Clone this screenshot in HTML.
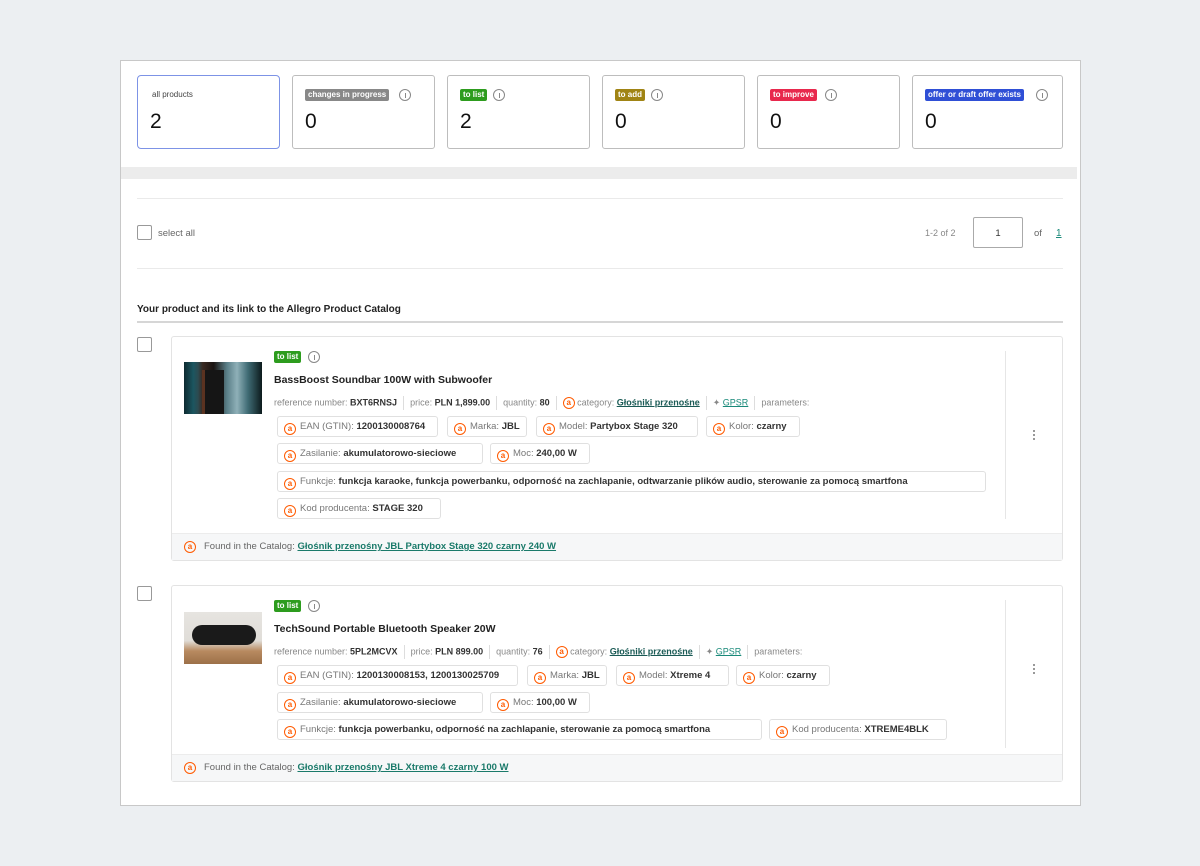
<!DOCTYPE html><html><head><meta charset="utf-8"><style>
*{box-sizing:border-box;margin:0;padding:0}
body{width:1200px;height:866px;background:#eceff2;font-family:"Liberation Sans",sans-serif;position:relative;overflow:hidden;color:#222}
.panel{position:absolute;left:120px;top:60px;width:961px;height:746px;background:#fff;border:1px solid #c8c8c8}
.a{position:absolute}
.stat{position:absolute;top:75px;width:143px;height:74px;border:1px solid #bdbdbd;border-radius:3px;background:#fff}
.stat .n{position:absolute;left:12px;top:34px;font-size:21px;color:#111}
.tag{position:absolute;left:12px;top:13px;font-size:8px;color:#fff;font-weight:bold;padding:1px 3px;border-radius:2px;line-height:10px}
.info{display:inline-block;width:12px;height:12px;border:1px solid #888;border-radius:50%;position:absolute;top:13px}
.info:after{content:"";position:absolute;left:4.5px;top:3px;width:1px;height:5px;background:#888}
.cb{position:absolute;width:15px;height:15px;border:1px solid #999;border-radius:2px;background:#fff}
.card{position:absolute;left:171px;width:892px;border:1px solid #e3e3e3;border-radius:3px;background:#fff}
.foot{position:absolute;left:0;right:0;bottom:0;height:27px;background:#f6f7f8;border-top:1px solid #ececec;font-size:9.5px;color:#666;padding:7px 0 0 32px}
.foot b{color:#1a7a6a;text-decoration:underline}
.al{display:inline-block;width:12px;height:12px;border:1.3px solid #ff5a00;border-radius:50%;color:#ff5a00;font-size:8px;line-height:9px;text-align:center;vertical-align:middle;font-weight:bold}
.chip{position:absolute;height:21px;border:1px solid #e0e0e0;border-radius:3px;font-size:9.5px;color:#777;padding:4px 0 0 6px;white-space:nowrap;overflow:hidden}
.chip b{color:#333}
.chip .al{margin-right:4px;vertical-align:-2px}
.meta{position:absolute;left:102px;font-size:9px;color:#888;white-space:nowrap}
.meta b{color:#333}
.sep{display:inline-block;width:1px;height:14px;background:#ddd;vertical-align:middle;margin:0 6px}
.title{position:absolute;left:102px;font-size:10.5px;font-weight:bold;color:#222}
.img{position:absolute;left:12px;width:78px;height:52px;overflow:hidden}
.dots{position:absolute;left:861px;width:3px}
.dots i{display:block;width:2px;height:2px;background:#999;margin-bottom:2px}
.vd{position:absolute;left:833px;width:1px;background:#e6e6e6}
</style></head><body>
<div class="panel"></div>
<div class="stat" style="left:137px;border-color:#7d93e6;border-width:1.5px;border-radius:4px"><div class="a" style="left:14px;top:14px;font-size:8px;color:#444">all products</div><div class="n">2</div></div>
<div class="stat" style="left:292px"><span class="tag" style="background:#888">changes in progress</span><span class="info" style="left:106px"></span><div class="n">0</div></div>
<div class="stat" style="left:447px"><span class="tag" style="background:#2d9c1e">to list</span><span class="info" style="left:45px"></span><div class="n">2</div></div>
<div class="stat" style="left:602px"><span class="tag" style="background:#a08414">to add</span><span class="info" style="left:48px"></span><div class="n">0</div></div>
<div class="stat" style="left:757px"><span class="tag" style="background:#e8284d">to improve</span><span class="info" style="left:67px"></span><div class="n">0</div></div>
<div class="stat" style="left:912px;width:151px"><span class="tag" style="background:#2f4fd6">offer or draft offer exists</span><span class="info" style="left:123px"></span><div class="n">0</div></div>
<div class="a" style="left:121px;top:167px;width:956px;height:12px;background:#ececec"></div>
<div class="a" style="left:137px;top:198px;width:926px;height:1px;background:#eaeaea"></div>
<div class="cb" style="left:137px;top:225px"></div>
<div class="a" style="left:158px;top:228px;font-size:9.5px;color:#666">select all</div>
<div class="a" style="left:925px;top:228px;font-size:9px;color:#888">1-2 of 2</div>
<div class="a" style="left:973px;top:217px;width:50px;height:31px;border:1px solid #aaa;border-radius:2px;font-size:9.5px;text-align:center;padding-top:10px;color:#333">1</div>
<div class="a" style="left:1034px;top:228px;font-size:9.5px;color:#666">of</div>
<div class="a" style="left:1056px;top:228px;font-size:10px;color:#1a8a7a;text-decoration:underline">1</div>
<div class="a" style="left:137px;top:268px;width:926px;height:1px;background:#eaeaea"></div>
<div class="a" style="left:137px;top:304px;font-size:10px;font-weight:bold;color:#222">Your product and its link to the Allegro Product Catalog</div>
<div class="a" style="left:137px;top:321px;width:926px;height:2px;background:#d6d6d6"></div>

<div class="cb" style="left:137px;top:337px"></div>
<div class="card" style="top:336px;height:225px">
 <div class="img" style="top:25px;background:linear-gradient(90deg,#0d2a30 0,#1c5660 12%,#2c4a50 18%,#3a2a22 24%,#1a1412 38%,#5a7f88 55%,#8fb0b8 68%,#3f6b74 82%,#0c1a1c 100%)"><div style="position:absolute;left:18px;top:8px;width:22px;height:44px;background:#151515;border-left:3px solid #5a3220"></div></div>
 <span class="tag" style="left:102px;top:14px;background:#2d9c1e">to list</span><span class="info" style="left:136px;top:14px"></span>
 <div class="title" style="top:37px">BassBoost Soundbar 100W with Subwoofer</div>
 <div class="meta" style="top:59px">reference number: <b>BXT6RNSJ</b><span class="sep"></span>price: <b>PLN 1,899.00</b><span class="sep"></span>quantity: <b>80</b><span class="sep"></span><span class="al">a</span> category: <b style="color:#1a5a55;text-decoration:underline">Głośniki przenośne</b><span class="sep"></span><span style="color:#888">✦</span> <span style="color:#1a8a7a;text-decoration:underline">GPSR</span><span class="sep"></span>parameters:</div>
 <div class="chip" style="left:105px;top:79px;width:161px"><span class="al">a</span>EAN (GTIN): <b>1200130008764</b></div>
 <div class="chip" style="left:275px;top:79px;width:80px"><span class="al">a</span>Marka: <b>JBL</b></div>
 <div class="chip" style="left:364px;top:79px;width:162px"><span class="al">a</span>Model: <b>Partybox Stage 320</b></div>
 <div class="chip" style="left:534px;top:79px;width:94px"><span class="al">a</span>Kolor: <b>czarny</b></div>
 <div class="chip" style="left:105px;top:106px;width:206px"><span class="al">a</span>Zasilanie: <b>akumulatorowo-sieciowe</b></div>
 <div class="chip" style="left:318px;top:106px;width:100px"><span class="al">a</span>Moc: <b>240,00 W</b></div>
 <div class="chip" style="left:105px;top:134px;width:709px"><span class="al">a</span>Funkcje: <b>funkcja karaoke, funkcja powerbanku, odporność na zachlapanie, odtwarzanie plików audio, sterowanie za pomocą smartfona</b></div>
 <div class="chip" style="left:105px;top:161px;width:164px"><span class="al">a</span>Kod producenta: <b>STAGE 320</b></div>
 <div class="vd" style="top:14px;height:168px"></div>
 <div class="dots" style="top:93px"><i></i><i></i><i></i></div>
 <div class="foot"><span class="al" style="position:absolute;left:12px;top:7px">a</span>Found in the Catalog: <b>Głośnik przenośny JBL Partybox Stage 320 czarny 240 W</b></div>
</div>

<div class="cb" style="left:137px;top:586px"></div>
<div class="card" style="top:585px;height:197px">
 <div class="img" style="top:26px;background:linear-gradient(180deg,#e6e4e0 0,#e0ddd8 55%,#b88a60 75%,#9c7048 100%)"><div style="position:absolute;left:8px;top:13px;width:64px;height:20px;border-radius:10px;background:#1a1a1a"></div></div>
 <span class="tag" style="left:102px;top:14px;background:#2d9c1e">to list</span><span class="info" style="left:136px;top:14px"></span>
 <div class="title" style="top:37px">TechSound Portable Bluetooth Speaker 20W</div>
 <div class="meta" style="top:59px">reference number: <b>5PL2MCVX</b><span class="sep"></span>price: <b>PLN 899.00</b><span class="sep"></span>quantity: <b>76</b><span class="sep"></span><span class="al">a</span> category: <b style="color:#1a5a55;text-decoration:underline">Głośniki przenośne</b><span class="sep"></span><span style="color:#888">✦</span> <span style="color:#1a8a7a;text-decoration:underline">GPSR</span><span class="sep"></span>parameters:</div>
 <div class="chip" style="left:105px;top:79px;width:241px"><span class="al">a</span>EAN (GTIN): <b>1200130008153, 1200130025709</b></div>
 <div class="chip" style="left:355px;top:79px;width:80px"><span class="al">a</span>Marka: <b>JBL</b></div>
 <div class="chip" style="left:444px;top:79px;width:113px"><span class="al">a</span>Model: <b>Xtreme 4</b></div>
 <div class="chip" style="left:564px;top:79px;width:94px"><span class="al">a</span>Kolor: <b>czarny</b></div>
 <div class="chip" style="left:105px;top:106px;width:206px"><span class="al">a</span>Zasilanie: <b>akumulatorowo-sieciowe</b></div>
 <div class="chip" style="left:318px;top:106px;width:100px"><span class="al">a</span>Moc: <b>100,00 W</b></div>
 <div class="chip" style="left:105px;top:133px;width:485px"><span class="al">a</span>Funkcje: <b>funkcja powerbanku, odporność na zachlapanie, sterowanie za pomocą smartfona</b></div>
 <div class="chip" style="left:597px;top:133px;width:178px"><span class="al">a</span>Kod producenta: <b>XTREME4BLK</b></div>
 <div class="vd" style="top:14px;height:148px"></div>
 <div class="dots" style="top:78px"><i></i><i></i><i></i></div>
 <div class="foot"><span class="al" style="position:absolute;left:12px;top:7px">a</span>Found in the Catalog: <b>Głośnik przenośny JBL Xtreme 4 czarny 100 W</b></div>
</div>
</body></html>
